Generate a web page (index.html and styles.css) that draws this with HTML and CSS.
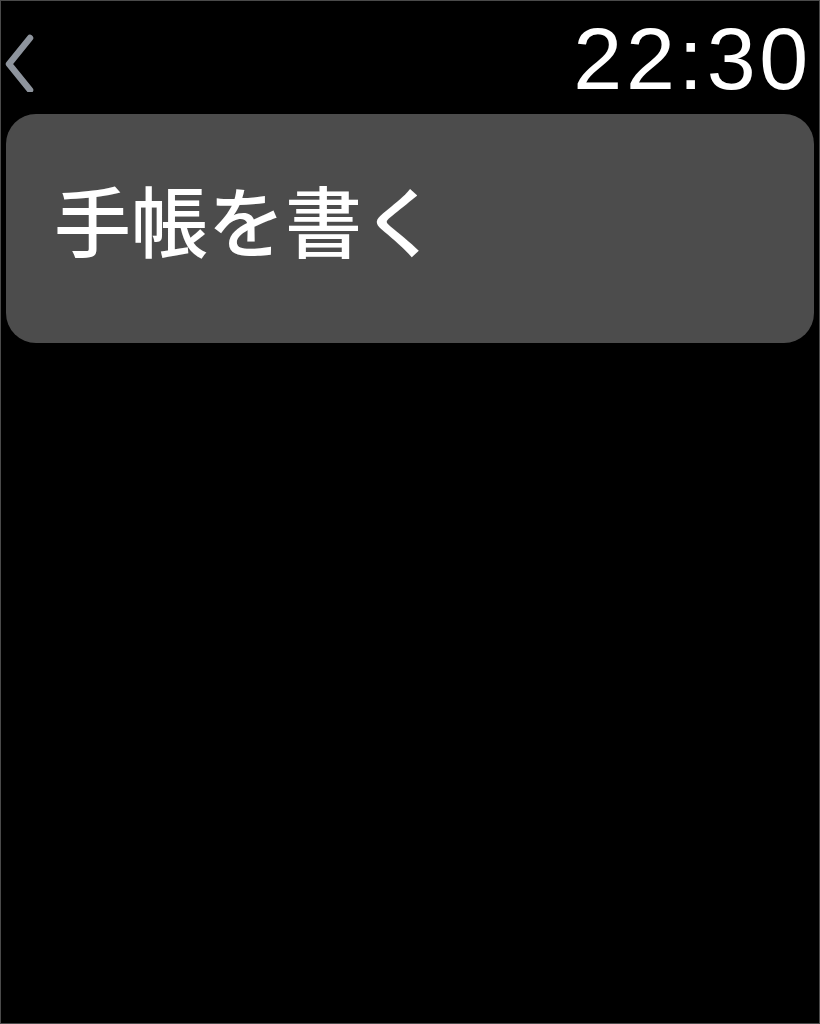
FILE: index.html
```html
<!DOCTYPE html>
<html lang="ja">
<head>
<meta charset="utf-8">
<link rel="stylesheet" href="styles.css">
</head>
<body>
<div class="screen">
  <header class="bar">
    <svg class="back" width="36" height="60" viewBox="0 0 36 60" aria-hidden="true">
      <path d="M31 6 L10 32 L31 58" fill="none" stroke="#8e949d" stroke-width="6.5" stroke-linecap="round" stroke-linejoin="round"/>
    </svg>
    <div class="time">22:30</div>
  </header>
  <div class="card">
    <span class="label">手帳を書く</span>
  </div>
</div>
</body>
</html>
```
FILE: styles.css
```css
html, body {
  margin: 0;
  padding: 0;
  background: #000;
}
.screen {
  width: 820px;
  height: 1024px;
  box-sizing: border-box;
  border: 1px solid #4a4a4a;
  background: #000;
  padding: 0 5px 0 5px;
  display: flex;
  flex-direction: column;
}
.bar {
  height: 113px;
  display: flex;
  justify-content: space-between;
  align-items: flex-start;
}
.back {
  margin-top: 31px;
  margin-left: -7px;
}
.time {
  font-family: "Liberation Sans", Arial, sans-serif;
  font-size: 88px;
  line-height: 1;
  color: #fff;
  margin-top: 14px;
  margin-right: 2px;
  letter-spacing: 3.7px;
}
.card {
  height: 229px;
  background: #4c4c4c;
  border-radius: 30px;
  display: flex;
  align-items: flex-start;
  padding: 66px 0 0 48px;
  box-sizing: border-box;
}
.label {
  font-family: "Noto Sans CJK JP", "Noto Sans", sans-serif;
  font-size: 77px;
  font-weight: 500;
  line-height: 1;
  color: #fff;
  letter-spacing: 0;
}
```
